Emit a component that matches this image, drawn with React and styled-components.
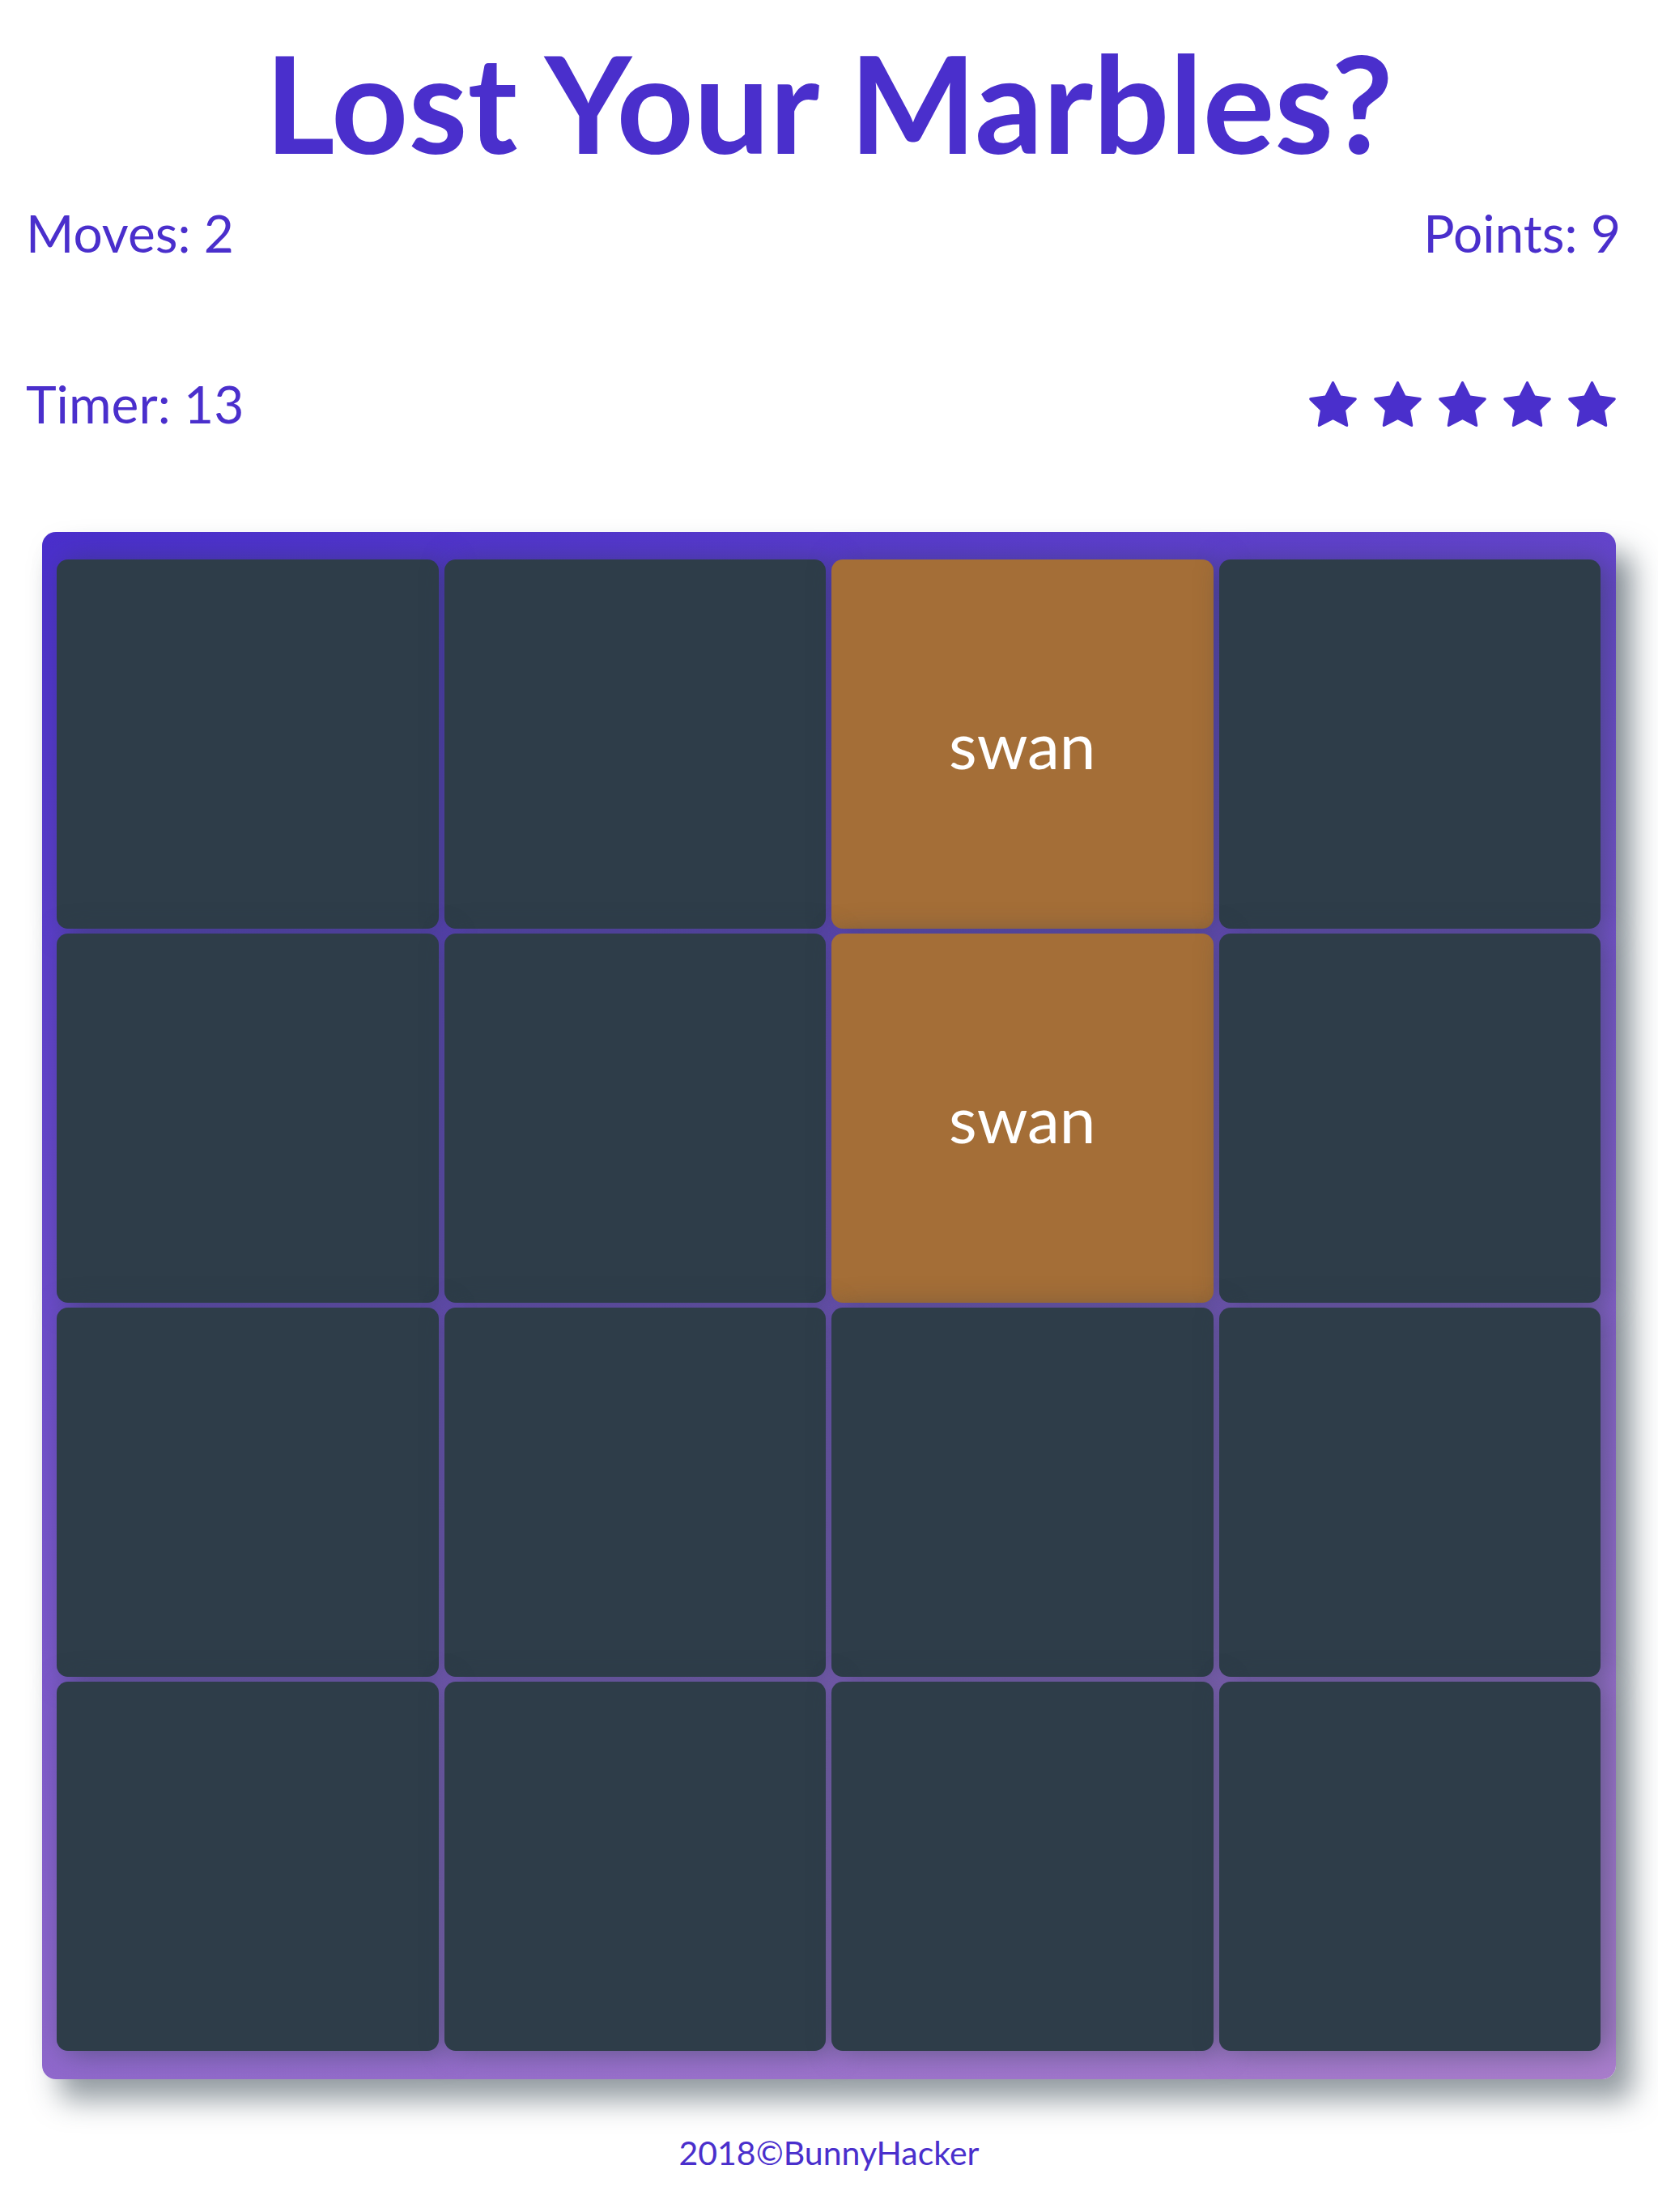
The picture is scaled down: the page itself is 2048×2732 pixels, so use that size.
import React from "react";
import styled, { createGlobalStyle } from "styled-components";

const GlobalStyle = createGlobalStyle`
  html, body {
    margin: 0;
    padding: 0;
    background: #ffffff;
    font-family: Lato, "Open Sans", sans-serif;
  }
`;

const ACCENT = "#4a2fcc";

const Page = styled.div`
  display: flex;
  flex-direction: column;
  min-height: 2732px;
  box-sizing: border-box;
  padding-bottom: 40px;
`;

const Title = styled.h1`
  margin: 26px 0 0;
  text-align: center;
  font-family: Lato, sans-serif;
  font-weight: 700;
  font-size: 166px;
  line-height: 200px;
  color: ${ACCENT};
`;

const ScorePanel = styled.section`
  display: flex;
  flex-direction: column;
  padding: 0 0 0 32px;
  color: ${ACCENT};
`;

const ScoreRow = styled.div`
  display: flex;
  justify-content: space-between;
  align-items: center;
  margin-top: ${(p) => p.$top}px;
  padding-right: ${(p) => p.$right}px;
`;

const Stat = styled.span`
  font-size: 64px;
  line-height: 80px;
  font-weight: 400;
`;

const Stars = styled.ul`
  display: flex;
  gap: 21px;
  list-style: none;
  margin: 0;
  padding: 0;
`;

const StarItem = styled.li`
  display: flex;
  width: 59px;
  height: 56px;
`;

const Deck = styled.main`
  margin: 118px 52px 0;
  padding: 34px 19px 35px 18px;
  display: grid;
  grid-template-columns: repeat(4, 1fr);
  grid-auto-rows: 456px;
  column-gap: 7px;
  row-gap: 6px;
  border-radius: 17px;
  background: linear-gradient(160deg, #4a2fcc 0%, #aa7ecd 100%);
  box-shadow: 21px 26px 35px 0 rgba(46, 61, 73, 0.5);
`;

const Card = styled.div`
  display: flex;
  align-items: center;
  justify-content: center;
  border-radius: 14px;
  background: ${(p) => (p.$open ? "#a46e37" : "#2e3d49")};
  box-shadow: 9px 3px 35px 0 rgba(46, 61, 73, 0.5);
  color: #ffffff;
  font-size: 80px;
  font-weight: 400;
`;

const Footer = styled.footer`
  margin-top: 67px;
  text-align: center;
  font-size: 41px;
  line-height: 48px;
  color: ${ACCENT};
`;

const Star = () => (
  <svg width="59" height="56" viewBox="64 32 1664 1587" fill={ACCENT} aria-hidden="true">
    <path d="M1728 647q0 22-26 48l-363 354 86 500q1 7 1 20 0 21-10.5 35.5t-30.5 14.5q-19 0-40-12l-449-236-449 236q-22 12-40 12-21 0-31.5-14.5t-10.5-35.5q0-6 2-20l86-500-364-354q-25-27-25-48 0-37 56-46l502-73 225-455q19-41 49-41t49 41l225 455 502 73q56 9 56 46z" />
  </svg>
);

const cards = Array.from({ length: 16 }, (_, i) => ({
  id: i,
  open: i === 2 || i === 6,
  label: i === 2 || i === 6 ? "swan" : "",
}));

export default function App() {
  return (
    <>
      <GlobalStyle />
      <Page>
        <Title>Lost Your Marbles?</Title>
        <ScorePanel>
          <ScoreRow $top={22} $right={46}>
            <Stat>Moves: 2</Stat>
            <Stat>Points: 9</Stat>
          </ScoreRow>
          <ScoreRow $top={131} $right={52}>
            <Stat>Timer: 13</Stat>
            <Stars>
              {[0, 1, 2, 3, 4].map((s) => (
                <StarItem key={s}>
                  <Star />
                </StarItem>
              ))}
            </Stars>
          </ScoreRow>
        </ScorePanel>
        <Deck>
          {cards.map((c) => (
            <Card key={c.id} $open={c.open}>
              {c.label}
            </Card>
          ))}
        </Deck>
        <Footer>2018©BunnyHacker</Footer>
      </Page>
    </>
  );
}
